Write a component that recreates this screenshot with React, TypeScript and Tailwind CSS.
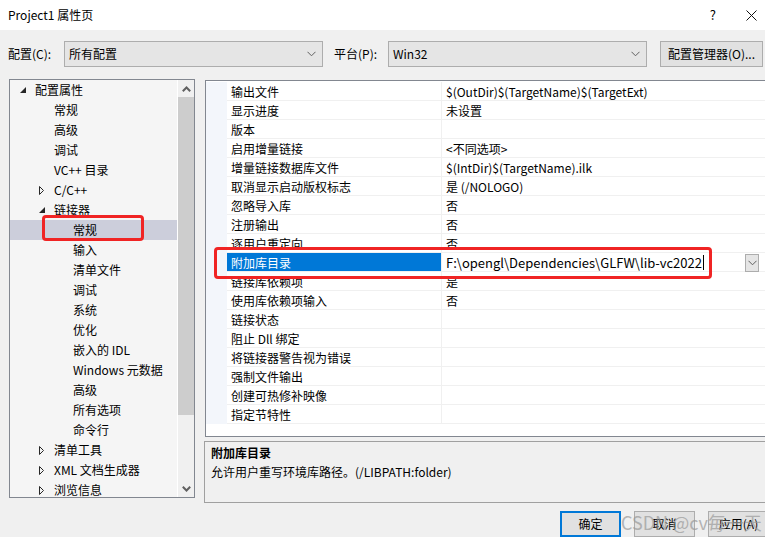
import React from "react";

const FONT = { fontFamily: '"Noto Sans CJK SC", "Noto Sans", "Liberation Sans", sans-serif' };

type TreeItem = { t: string; l: number; exp?: boolean; col?: boolean; sel?: boolean };

const tree: TreeItem[] = [
  { t: "配置属性", l: 0, exp: true },
  { t: "常规", l: 1 },
  { t: "高级", l: 1 },
  { t: "调试", l: 1 },
  { t: "VC++ 目录", l: 1 },
  { t: "C/C++", l: 1, col: true },
  { t: "链接器", l: 1, exp: true },
  { t: "常规", l: 2, sel: true },
  { t: "输入", l: 2 },
  { t: "清单文件", l: 2 },
  { t: "调试", l: 2 },
  { t: "系统", l: 2 },
  { t: "优化", l: 2 },
  { t: "嵌入的 IDL", l: 2 },
  { t: "Windows 元数据", l: 2 },
  { t: "高级", l: 2 },
  { t: "所有选项", l: 2 },
  { t: "命令行", l: 2 },
  { t: "清单工具", l: 1, col: true },
  { t: "XML 文档生成器", l: 1, col: true },
  { t: "浏览信息", l: 1, col: true },
];

const pads = ["pl-[10px]", "pl-[29px]", "pl-[48px]"];

const rows: [string, string, boolean?][] = [
  ["输出文件", "$(OutDir)$(TargetName)$(TargetExt)"],
  ["显示进度", "未设置"],
  ["版本", ""],
  ["启用增量链接", "<不同选项>"],
  ["增量链接数据库文件", "$(IntDir)$(TargetName).ilk"],
  ["取消显示启动版权标志", "是 (/NOLOGO)"],
  ["忽略导入库", "否"],
  ["注册输出", "否"],
  ["逐用户重定向", "否"],
  ["附加库目录", "F:\\opengl\\Dependencies\\GLFW\\lib-vc2022", true],
  ["链接库依赖项", "是"],
  ["使用库依赖项输入", "否"],
  ["链接状态", ""],
  ["阻止 Dll 绑定", ""],
  ["将链接器警告视为错误", ""],
  ["强制文件输出", ""],
  ["创建可热修补映像", ""],
  ["指定节特性", ""],
];

function Chevron({ className = "" }: { className?: string }) {
  return (
    <svg width="9" height="6" viewBox="0 0 9 6" className={className}>
      <polyline points="0.5,0.8 4.5,4.8 8.5,0.8" fill="none" stroke="#606060" strokeWidth="1" />
    </svg>
  );
}

function ExpArrow() {
  return (
    <svg width="6" height="6" viewBox="0 0 6 6">
      <polygon points="6,0 6,6 0,6" fill="#262626" />
    </svg>
  );
}

function ColArrow() {
  return (
    <svg width="5" height="9" viewBox="0 0 5 9">
      <polygon points="0.5,0.5 4.5,4.5 0.5,8.5" fill="none" stroke="#262626" strokeWidth="1" />
    </svg>
  );
}

export default function App() {
  return (
    <div className="relative w-[765px] h-[537px] overflow-hidden bg-[#f0f0f0] text-[12px] text-black" style={FONT}>
      {/* title bar */}
      <div className="h-[30px] bg-white flex items-center pl-[8px]">
        <span className="text-[12px]">Project1 属性页</span>
        <span className="ml-auto mr-[30px] text-[13px]">?</span>
        <svg width="11" height="11" viewBox="0 0 11 11" className="mr-[8px]">
          <line x1="0.5" y1="0.5" x2="10.5" y2="10.5" stroke="#111" strokeWidth="1" />
          <line x1="10.5" y1="0.5" x2="0.5" y2="10.5" stroke="#111" strokeWidth="1" />
        </svg>
      </div>

      {/* config row */}
      <div className="mt-[11px] h-[26px] flex items-center pl-[8px]">
        <div className="w-[56px]">配置(C):</div>
        <div className="w-[259px] h-[26px] shrink-0 border border-[#adadad] bg-[#e5e5e5] flex items-center pl-[4px] pr-[6px]">
          <span>所有配置</span>
          <Chevron className="ml-auto" />
        </div>
        <div className="ml-[11px] w-[54px]">平台(P):</div>
        <div className="w-[259px] h-[26px] shrink-0 border border-[#adadad] bg-[#e5e5e5] flex items-center pl-[4px] pr-[6px]">
          <span>Win32</span>
          <Chevron className="ml-auto" />
        </div>
        <div className="ml-[13px] w-[103px] h-[26px] shrink-0 border border-[#adadad] bg-[#e1e1e1] flex items-center justify-center">
          配置管理器(O)...
        </div>
      </div>

      {/* main area */}
      <div className="mt-[12px] flex items-start">
        {/* tree */}
        <div className="relative ml-[9px] w-[186px] h-[419px] shrink-0 border border-[#828790] bg-[#f5f5f5] flex overflow-hidden">
          <div className="flex-1 flex flex-col border-r border-white">
            {tree.map((it, i) => (
              <div
                key={i}
                className={`h-[20px] shrink-0 flex items-center ${pads[it.l]} ${it.sel ? "bg-[#cccedb]" : ""}`}
              >
                <div className="w-[15px] flex items-center">
                  {it.exp ? <ExpArrow /> : it.col ? <ColArrow /> : null}
                </div>
                <span className="whitespace-nowrap">{it.t}</span>
              </div>
            ))}
          </div>
          <div className="w-[16px] shrink-0 bg-[#f0f0f0] flex flex-col">
            <div className="h-[17px] flex items-center justify-center">
              <svg width="9" height="6" viewBox="0 0 9 6">
                <polyline points="0.8,5.2 4.5,1.5 8.2,5.2" fill="none" stroke="#606060" strokeWidth="2" />
              </svg>
            </div>
            <div className="h-[318px] bg-[#cdcdcd]" />
            <div className="flex-1" />
            <div className="h-[17px] flex items-center justify-center">
              <svg width="9" height="6" viewBox="0 0 9 6">
                <polyline points="0.8,0.8 4.5,4.5 8.2,0.8" fill="none" stroke="#606060" strokeWidth="2" />
              </svg>
            </div>
          </div>
          {/* annotation */}
          <div className="absolute left-[32px] top-[135px] w-[102px] h-[26px] border-[3px] border-[#f02424] rounded-[4px]" />
        </div>

        {/* right side */}
        <div className="ml-[10px] mt-[1px] flex flex-col shrink-0">
          <div className="relative w-[565px] h-[357px] border border-[#828790] bg-white">
            <div className="flex flex-col pt-[1px]">
              {rows.map(([name, val, sel], i) => (
                <div key={i} className="h-[19px] flex shrink-0">
                  <div className="w-[21px] shrink-0 bg-[#f3f6fb]" />
                  <div
                    className={`w-[215px] shrink-0 flex items-center pl-[4px] pt-[1px] border-r border-b border-[#f0f0f0] whitespace-nowrap ${
                      sel ? "bg-[#0078d7] text-white" : ""
                    }`}
                  >
                    {name}
                  </div>
                  <div className="flex-1 flex items-center pl-[4px] pt-[1px] border-b border-[#f0f0f0] whitespace-nowrap">
                    {sel ? (
                      <>
                        <span className="text-[13px]">{val}</span>
                        <span className="ml-[1px] w-[1px] h-[15px] bg-black" />
                        <div className="ml-auto mr-[10px] w-[14px] h-[18px] border border-[#adadad] bg-[#e5e5e5] flex items-center justify-center">
                          <Chevron />
                        </div>
                      </>
                    ) : (
                      val
                    )}
                  </div>
                </div>
              ))}
            </div>
            {/* annotation */}
            <div className="absolute left-[8px] top-[166px] w-[498px] h-[32px] border-[3px] border-[#f02424] rounded-[4px]" />
          </div>

          <div className="mt-[4px] -ml-[1px] w-[566px] h-[62px] border border-[#a0a0a0] pl-[6px] pt-[1px]">
            <div className="font-bold leading-[19px]">附加库目录</div>
            <div className="leading-[19px]">允许用户重写环境库路径。(/LIBPATH:folder)</div>
          </div>
        </div>
      </div>

      {/* buttons */}
      <div className="mt-[8px] flex pl-[560px] gap-[13px]">
        <div className="w-[61px] h-[26px] shrink-0 border-2 border-[#0078d7] bg-[#e1e1e1] flex items-center justify-center">确定</div>
        <div className="w-[61px] h-[26px] shrink-0 border border-[#adadad] bg-[#e1e1e1] flex items-center justify-center">取消</div>
        <div className="w-[61px] h-[26px] shrink-0 border border-[#adadad] bg-[#e1e1e1] flex items-center justify-center">应用(A)</div>
      </div>

      {/* watermark */}
      <div className="absolute left-[621px] top-[509px] text-[18px] text-[#9a9a9a] opacity-70 whitespace-nowrap">
        CSDN @cv毎一天
      </div>
    </div>
  );
}
